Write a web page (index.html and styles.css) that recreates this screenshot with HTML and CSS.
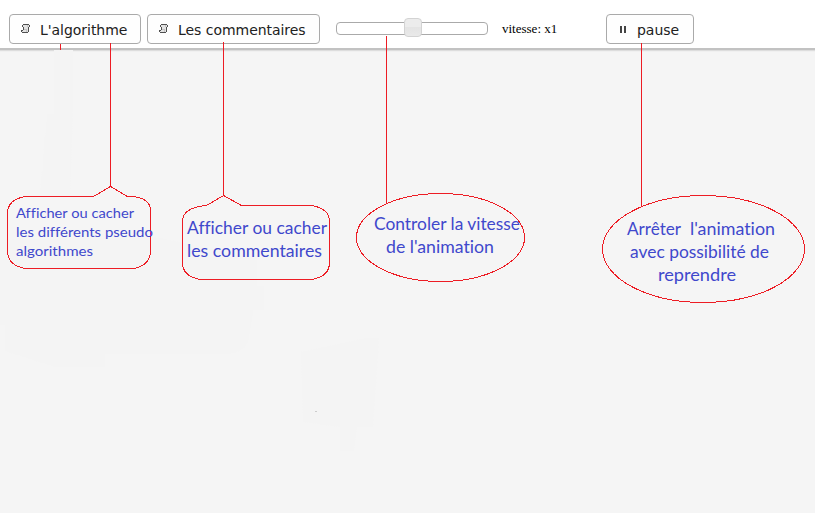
FILE: index.html
```html
<!DOCTYPE html>
<html lang="fr">
<head>
<meta charset="utf-8">
<title>Animation</title>
<link rel="stylesheet" href="styles.css">
</head>
<body>
<svg class="defs" aria-hidden="true">
  <symbol id="script" viewBox="0 0 10 10">
    <path d="M2 1H8V4H7V8H1V6H2Z" fill="#e2e2e2"/>
    <path d="M2 0H8V1H2ZM1 1H2V3H1ZM8 1H9V3H8ZM2 3H3V6H2ZM7 3H8V7H7ZM0 6H2V7H0ZM0 7H1V8H0ZM1 8H7V9H1ZM7 7H8V8H7Z" fill="#505050"/>
    <path d="M3 5H6V6H3ZM6 1H7V3H6ZM5 6H6V8H5Z" fill="#c4c4c4"/>
  </symbol>
</svg>
<header class="toolbar">
  <button class="button algorithm"><svg class="icon"><use href="#script"/></svg><span class="label">L'algorithme</span></button>
  <button class="button comments"><svg class="icon"><use href="#script"/></svg><span class="label">Les commentaires</span></button>
  <div class="slider"><span class="handle"></span></div>
  <span class="speed">vitesse: x1</span>
  <button class="button pause"><svg class="icon" viewBox="0 0 10 10"><path d="M2 2h2v7H2zM6 2h2v7H6z" fill="#444"/></svg><span class="label">pause</span></button>
</header>
<svg class="notes" viewBox="0 0 815 513">
  <g class="traces">
    <path d="M54 50H73V110L70 196H40L47 114H54Z"/>
    <path d="M0 240L150 236L257 258V286H264V310H253L248 340Q246 354 220 354H105V367H55L5 351V325H0Z"/>
    <path d="M301 352L366 338H379L373 427H357L354 451H340V427L303 422Z"/>
  </g>
  <path class="speck" d="M315 411.500h2"/>
  <g class="outline">
    <path d="M60.500 44V50M110.500 43V187M223.500 42V196M386.500 36V204M641.500 43V207"/>
    <path d="M25.500 196.500H93.500L110.500 186.500L127.500 196.500H133Q150.500 198.500 150.500 210.500V250.500Q150.500 265.500 133.500 268.500H25.500Q7.500 265.500 7.500 250.500V213.500Q7.500 199.500 25.500 196.500Z"/>
    <path d="M206.500 205.500L223.500 195.500L241.500 205.500H311.500Q329.500 208.500 329.500 221.500V262.500Q329.500 276.500 311.500 279.500H200.500Q182.500 276.500 182.500 262.500V221.500Q182.500 207.500 206.500 205.500Z"/>
    <ellipse cx="440.500" cy="237.500" rx="84" ry="44"/>
    <ellipse cx="703.500" cy="249" rx="101" ry="53.500"/>
  </g>
  <g class="small">
    <text x="16" y="218" textLength="118" lengthAdjust="spacingAndGlyphs">Afficher ou cacher</text>
    <text x="16" y="237" textLength="137" lengthAdjust="spacingAndGlyphs">les différents pseudo</text>
    <text x="16" y="256" textLength="77" lengthAdjust="spacingAndGlyphs">algorithmes</text>
  </g>
  <g class="large">
    <text x="187" y="234" textLength="140" lengthAdjust="spacingAndGlyphs">Afficher ou cacher</text>
    <text x="187" y="257" textLength="135" lengthAdjust="spacingAndGlyphs">les commentaires</text>
    <text x="374" y="230" textLength="146" lengthAdjust="spacingAndGlyphs">Controler la vitesse</text>
    <text x="386" y="253" textLength="108" lengthAdjust="spacingAndGlyphs">de l'animation</text>
    <text x="627" y="235" textLength="54" lengthAdjust="spacingAndGlyphs">Arrêter</text>
    <text x="690" y="235" textLength="85" lengthAdjust="spacingAndGlyphs">l'animation</text>
    <text x="630" y="258" textLength="139" lengthAdjust="spacingAndGlyphs">avec possibilité de</text>
    <text x="658" y="281" textLength="78" lengthAdjust="spacingAndGlyphs">reprendre</text>
  </g>
</svg>
</body>
</html>
```
FILE: styles.css
```css
* { box-sizing: border-box; }
body { margin: 0; height: 513px; overflow: hidden; background: #f5f5f5; }
.defs { display: none; }
.toolbar {
  display: flex;
  height: 48px;
  padding: 14px 0 0 9px;
  background: #fff;
  box-shadow: 0 2px 0 #c2c2c2, 0 3px 1px #ddd;
}
.button {
  display: flex;
  align-items: center;
  flex: none;
  height: 30px;
  padding: 0 0 0 11px;
  border: 1px solid #aaa;
  border-radius: 4px;
  background: #fefefe;
  color: #212121;
  font: 14px/20px "DejaVu Sans", sans-serif;
  white-space: nowrap;
}
.icon { width: 10px; height: 10px; flex: none; margin-right: 9px; shape-rendering: crispEdges; }
.label { padding-top: 2px; letter-spacing: -0.04px; }
.algorithm { width: 132px; margin-right: 6px; }
.comments { width: 173px; margin-right: 16px; }
.pause { width: 88px; }
.slider {
  display: flex;
  flex: none;
  align-items: center;
  width: 152px;
  height: 13px;
  margin: 8px 14px 0 0;
  padding-left: 67px;
  border: 1px solid #aaa;
  border-radius: 4px;
}
.handle {
  position: relative;
  top: -1px;
  width: 18px;
  height: 19px;
  flex: none;
  border: 1px solid #d3d3d3;
  border-radius: 4px;
  background: linear-gradient(#ececec 50%, #e4e4e4 50%, #e9e9e9);
}
.speed { width: 104px; padding-top: 7px; font: 13px/15px "Liberation Serif", serif; color: #000; }
.notes { position: absolute; inset: 0; width: 815px; height: 513px; pointer-events: none; }
.traces { fill: #f4f4f4; }
.speck { stroke: #ccc; shape-rendering: crispEdges; }
.outline { fill: none; stroke: #ed1c24; stroke-width: 1; shape-rendering: crispEdges; }
.small, .large { fill: #3f48cc; font-family: Lato, sans-serif; font-variant-ligatures: none; }
.small { font-size: 14px; }
.large { font-size: 18px; }
```
